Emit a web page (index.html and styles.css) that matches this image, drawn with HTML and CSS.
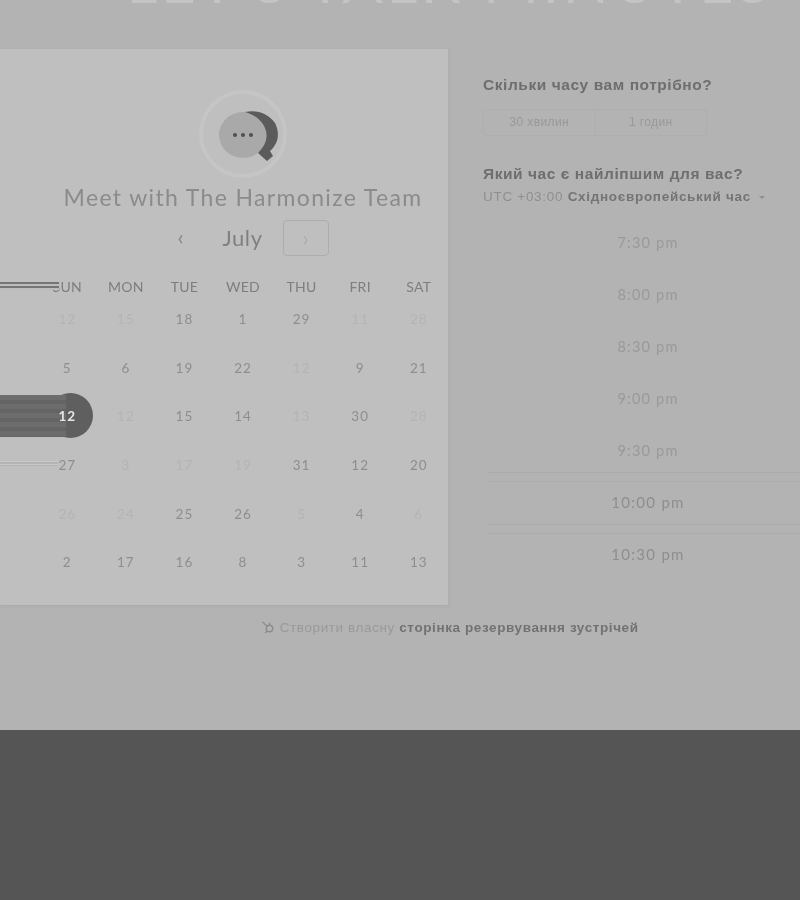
FILE: index.html
```html
<!DOCTYPE html>
<html>
    <head>
        <meta charset="UTF-8">
        <title>Meet with The Harmonize Team</title>
        <link rel="stylesheet" href="styles.css">
    </head>
    <body>
        <div class="page">
            <div class="soft">
                <div class="hero">
                    <h1>LET'S TALK MINUTES</h1>
                </div>
                <div class="main">
                    <div class="card">
                        <svg class="logo" width="92" height="88" viewBox="0 0 92 88">
                            <circle cx="46" cy="44" r="42" fill="none" stroke="#c5c5c5" stroke-width="4"/>
                            <ellipse cx="46" cy="45" rx="24" ry="23" fill="#a9a9a9"/>
                            <path d="M48 22 C60 19 72 24 78 33 C84 45 80 55 73 61 L76 66 L70 71 L61 63 C67 57 71 50 69 41 C67 32 59 25 48 22 Z" fill="#5b5b5b"/>
                            <circle cx="38" cy="45" r="2" fill="#4f4f4f"/>
                            <circle cx="46" cy="45" r="2" fill="#4f4f4f"/>
                            <circle cx="54" cy="45" r="2" fill="#4f4f4f"/>
                        </svg>
                        <div class="team">Meet with The Harmonize Team</div>
                        <div class="month">
                            <span class="arrow">&lsaquo;</span>
                            <span class="month-name">July</span>
                            <span class="arrow next">&rsaquo;</span>
                        </div>
                        <div class="weekdays">
                            <span class="sun">SUN</span><span>MON</span><span>TUE</span><span>WED</span><span>THU</span><span>FRI</span><span>SAT</span>
                        </div>
                        <div class="days">
                            <span class="off">12</span><span class="off">15</span><span>18</span><span>1</span><span>29</span><span class="off">11</span><span class="off">28</span>
                            <span>5</span><span>6</span><span>19</span><span>22</span><span class="off">12</span><span>9</span><span>21</span>
                            <span class="picked">12</span><span class="off">12</span><span>15</span><span>14</span><span class="off">13</span><span>30</span><span class="off">28</span>
                            <span class="streak">27</span><span class="off">3</span><span class="off">17</span><span class="off">19</span><span>31</span><span>12</span><span>20</span>
                            <span class="off">26</span><span class="off">24</span><span>25</span><span>26</span><span class="off">5</span><span>4</span><span class="off">6</span>
                            <span>2</span><span>17</span><span>16</span><span>8</span><span>3</span><span>11</span><span>13</span>
                        </div>
                    </div>
                    <div class="side">
                        <h2>Скільки часу вам потрібно?</h2>
                        <div class="lengths">
                            <span>30 хвилин</span>
                            <span>1 годин</span>
                        </div>
                        <h2 class="when">Який час є найліпшим для вас?</h2>
                        <div class="zone">UTC +03:00 <b>Східноєвропейський час</b> <i class="caret"></i></div>
                        <div class="slots">
                            <div class="slot">7:30 pm</div>
                            <div class="slot">8:00 pm</div>
                            <div class="slot">8:30 pm</div>
                            <div class="slot">9:00 pm</div>
                            <div class="slot line-bottom">9:30 pm</div>
                            <div class="slot line-top line-bottom dark">10:00 pm</div>
                            <div class="slot line-top dark">10:30 pm</div>
                        </div>
                    </div>
                </div>
                <div class="foot">
                    <svg class="sprocket" width="14" height="14" viewBox="0 0 14 14">
                        <circle cx="8.5" cy="8.5" r="3.2" fill="none" stroke="#8c8c8c" stroke-width="1.4"/>
                        <path d="M6 6 L1.5 2 M8.5 5 V2.5 M6 11 L4 13" fill="none" stroke="#8c8c8c" stroke-width="1.2"/>
                    </svg>
                    Створити власну <b>сторінка резервування зустрічей</b>
                </div>
            </div>
        </div>
        <div class="under"></div>
    </body>
</html>
```

FILE: styles.css
```css
html, body {
    margin: 0;
    height: 900px;
    overflow: hidden;
    background-color: #555;
}
.page {
    height: 730px;
    overflow: hidden;
    background-color: #b3b3b3;
    font-family: "Liberation Sans", sans-serif;
}
.soft {
    width: 800px;
    height: 734px;
    margin: 0 -4px;
    padding: 0 4px;
    background-color: #b3b3b3;
    filter: blur(0.65px);
}
.hero {
    display: flex;
    justify-content: center;
    height: 49px;
    padding-left: 100px;
}
.hero h1 {
    margin: -50px 0 0;
    font: 400 60px/60px Lato, sans-serif;
    letter-spacing: 3.6px;
    white-space: nowrap;
    color: #c4c4c4;
}
.main {
    display: flex;
    align-items: flex-start;
}
.card {
    box-sizing: border-box;
    flex: none;
    width: 448px;
    height: 556px;
    padding: 41px 0 0 38px;
    background-color: #bfbfbf;
    box-shadow: 0 1px 3px #a8a8a8;
    display: flex;
    flex-direction: column;
    align-items: center;
}
.logo {
    display: block;
}
.team {
    margin-top: 4px;
    font: 400 23px/30px Lato, sans-serif;
    letter-spacing: 1.35px;
    white-space: nowrap;
    color: #8b8b8b;
}
.month {
    display: flex;
    align-items: center;
    margin-top: 8px;
    height: 36px;
    font-family: Lato, sans-serif;
    color: #8a8a8a;
}
.month-name {
    width: 78px;
    margin-top: -2px;
    text-align: center;
    font-size: 22px;
    letter-spacing: 0.6px;
    color: #808080;
}
.arrow {
    box-sizing: border-box;
    width: 46px;
    height: 36px;
    text-align: center;
    font-size: 22px;
    line-height: 33px;
}
.arrow.next {
    margin-left: 1px;
    border: 1px solid #adadad;
    border-radius: 4px;
    color: #adadad;
}
.weekdays, .days {
    display: grid;
    grid-template-columns: repeat(7, 1fr);
    width: 100%;
    text-align: center;
    font-family: Lato, sans-serif;
}
.weekdays {
    margin-top: 21px;
    height: 18px;
    line-height: 20px;
    font-size: 14px;
    letter-spacing: 0.3px;
    color: #7e7e7e;
}
.sun {
    position: relative;
}
.sun::before {
    content: "";
    position: absolute;
    left: -38px;
    width: 59px;
    top: 5px;
    height: 8px;
    background: repeating-linear-gradient(#757575 0 2px, #bcbcbc 2px 4px);
}
.days {
    grid-auto-rows: 48.7px;
    line-height: 48.7px;
    font-size: 13.5px;
    letter-spacing: 1px;
    color: #8e8e8e;
}
.days span {
    position: relative;
}
.days .off {
    color: #b4b4b4;
}
.days .picked {
    color: #e6e6e6;
    font-weight: 700;
    z-index: 0;
}
.picked::before {
    content: "";
    position: absolute;
    z-index: -1;
    left: 10px;
    top: 1px;
    width: 45px;
    height: 45px;
    border-radius: 50%;
    background-color: #5f5f5f;
}
.picked::after {
    content: "";
    position: absolute;
    z-index: -1;
    left: -38px;
    top: 3px;
    width: 66px;
    height: 42px;
    background: repeating-linear-gradient(#6c6c6c 0 5px, #646464 5px 9px);
}
.streak::before {
    content: "";
    position: absolute;
    left: -38px;
    top: 20px;
    width: 58px;
    height: 5px;
    background: repeating-linear-gradient(#c9c9c9 0 1px, #b4b4b4 1px 3px);
}
.side {
    flex: none;
    width: 352px;
    padding: 26px 0 0 35px;
}
h2 {
    margin: 0;
    font-size: 15.5px;
    line-height: 20px;
    font-weight: 700;
    letter-spacing: 0.56px;
    white-space: nowrap;
    color: #6e6e6e;
}
.lengths {
    display: flex;
    width: 224px;
    height: 27px;
    margin-top: 14px;
    box-sizing: border-box;
    border: 1px solid #aeaeae;
    border-radius: 3px;
    font-size: 12px;
    line-height: 25px;
    letter-spacing: 0.4px;
    text-align: center;
    color: #999;
}
.lengths span {
    flex: 1;
}
.lengths span:first-child {
    border-right: 1px solid #aeaeae;
}
.when {
    margin-top: 28px;
}
.zone {
    margin-top: 3px;
    font-size: 13.5px;
    line-height: 20px;
    letter-spacing: 0.7px;
    white-space: nowrap;
    color: #8f8f8f;
}
.zone b {
    color: #747474;
}
.caret {
    display: inline-block;
    margin-left: 4px;
    vertical-align: middle;
    border: 3px solid transparent;
    border-top: 3px solid #8f8f8f;
    border-bottom: 0;
}
.slots {
    display: flex;
    flex-direction: column;
    gap: 8px;
    width: 320px;
    margin: 14px 0 0 5px;
}
.slot {
    box-sizing: border-box;
    height: 44px;
    border-top: 1px solid transparent;
    border-bottom: 1px solid transparent;
    text-align: center;
    font: 400 14.5px/41px Lato, sans-serif;
    letter-spacing: 1.2px;
    color: #999;
}
.slot.dark {
    font-size: 15px;
    letter-spacing: 1.3px;
    color: #8e8e8e;
}
.slot.line-top {
    border-top-color: #acacac;
}
.slot.line-bottom {
    border-bottom-color: #acacac;
}
.foot {
    margin: 13px 0 0 100px;
    text-align: center;
    font-size: 13.5px;
    line-height: 20px;
    letter-spacing: 0.6px;
    white-space: nowrap;
    color: #999;
}
.foot b {
    color: #727272;
}
.sprocket {
    vertical-align: -2px;
}
.under {
    height: 170px;
}
```
